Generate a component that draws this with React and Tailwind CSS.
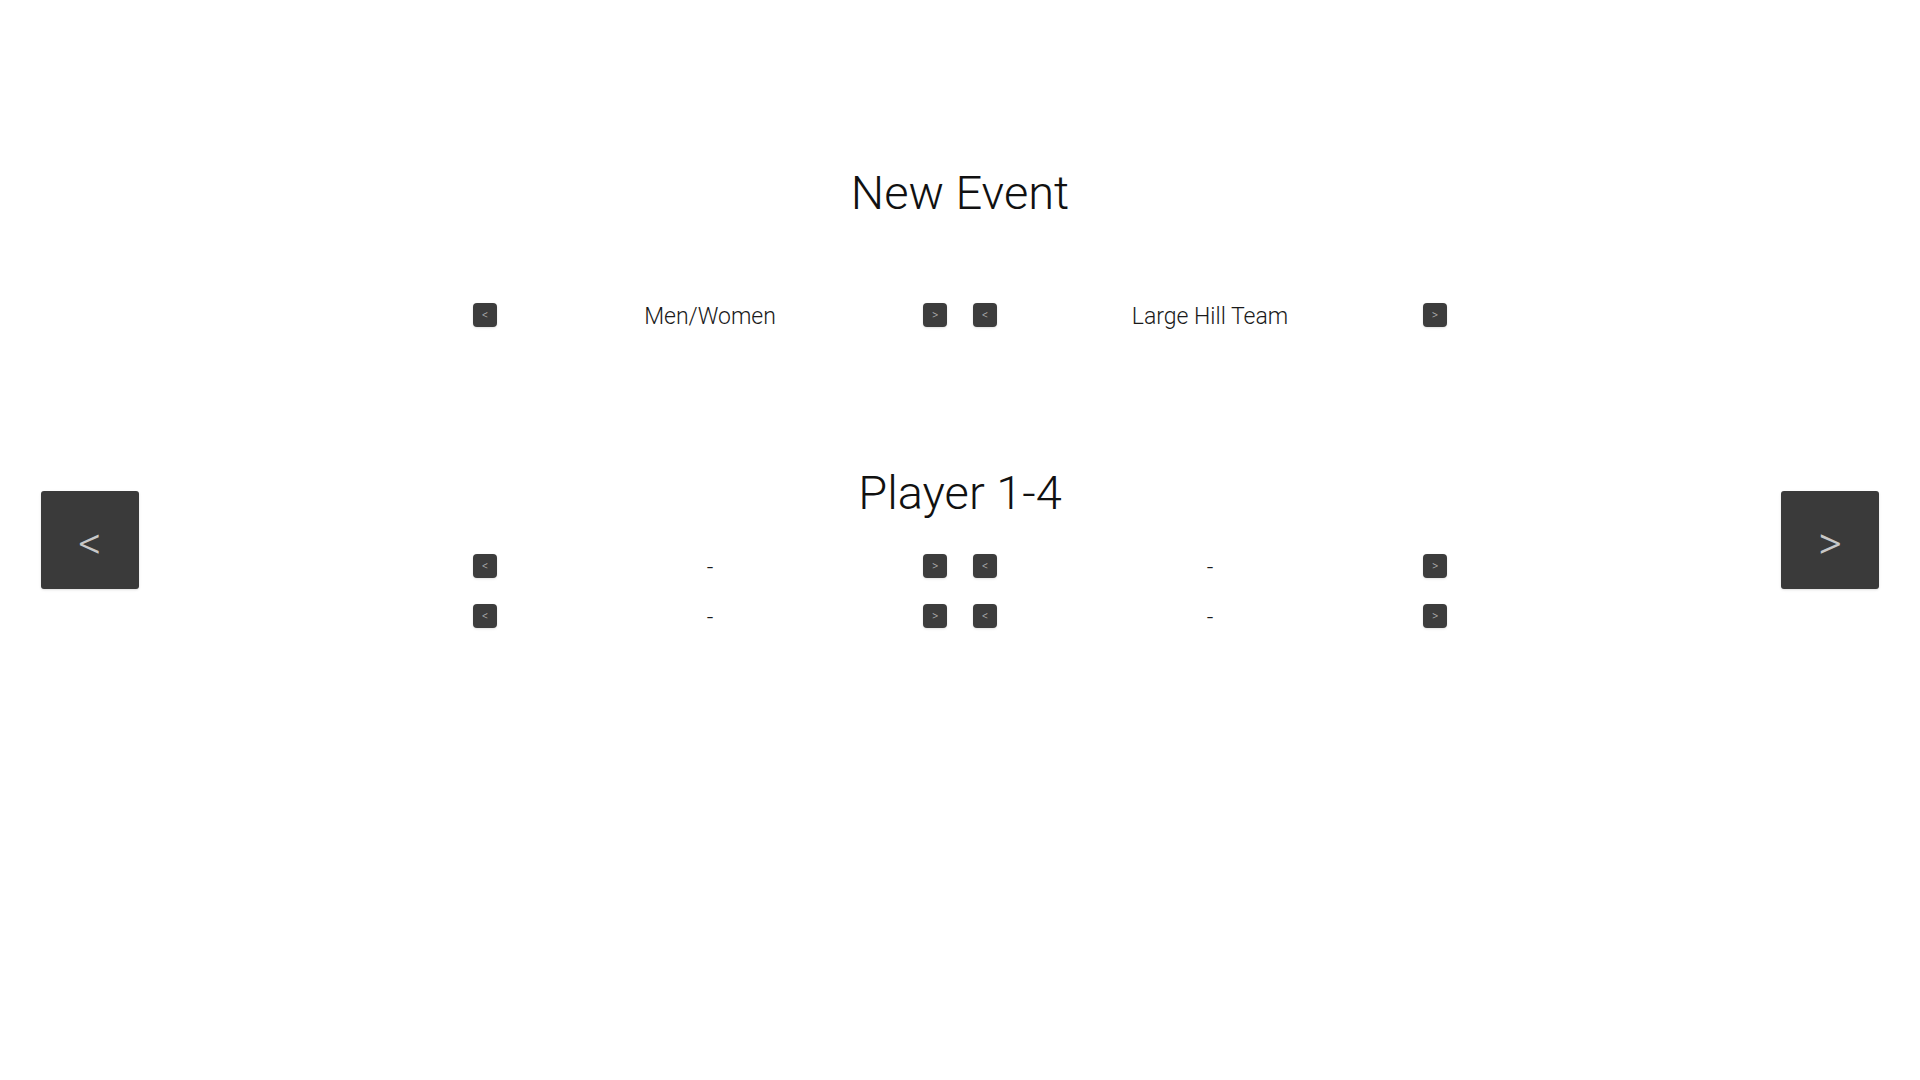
import React from 'react';

function SmallButton({ children }) {
  return (
    <button className="w-[24px] h-[24px] rounded-[4px] bg-[#3c3c3c] text-[#b0b0b0] text-[12px] font-light leading-none flex items-center justify-center shadow-sm">
      {children}
    </button>
  );
}

function Selector({ value }) {
  return (
    <div className="w-[474px] h-[24px] flex items-center justify-between">
      <SmallButton>&lt;</SmallButton>
      <span className="text-[23px] font-light text-[#1a1a1a] leading-none mt-[3px]">{value}</span>
      <SmallButton>&gt;</SmallButton>
    </div>
  );
}

function Row({ left, right }) {
  return (
    <div className="flex gap-[26px]">
      <Selector value={left} />
      <Selector value={right} />
    </div>
  );
}

function NavButton({ children }) {
  return (
    <button className="w-[98px] h-[98px] self-center rounded-[3px] bg-[#3a3a3a] text-[#c8c8c8] text-[46px] font-light leading-none pt-[5px] flex items-center justify-center shadow">
      {children}
    </button>
  );
}

export default function App() {
  const players = [
    ['-', '-'],
    ['-', '-'],
  ];

  return (
    <div className="w-full h-[1080px] bg-white flex px-[41px] font-['Roboto','Liberation_Sans',sans-serif]">
      <NavButton>&lt;</NavButton>
      <div className="flex-1 flex flex-col items-center pt-[161px]">
        <h1 className="text-[47px] font-light leading-[64px] text-[#111]">New Event</h1>
        <div className="mt-[78px]">
          <Row left="Men/Women" right="Large Hill Team" />
        </div>
        <h2 className="mt-[134px] text-[47px] font-light leading-[64px] text-[#111]">Player 1-4</h2>
        <div className="mt-[29px] flex flex-col gap-[26px]">
          {players.map((p, i) => (
            <Row key={i} left={p[0]} right={p[1]} />
          ))}
        </div>
      </div>
      <NavButton>&gt;</NavButton>
    </div>
  );
}
